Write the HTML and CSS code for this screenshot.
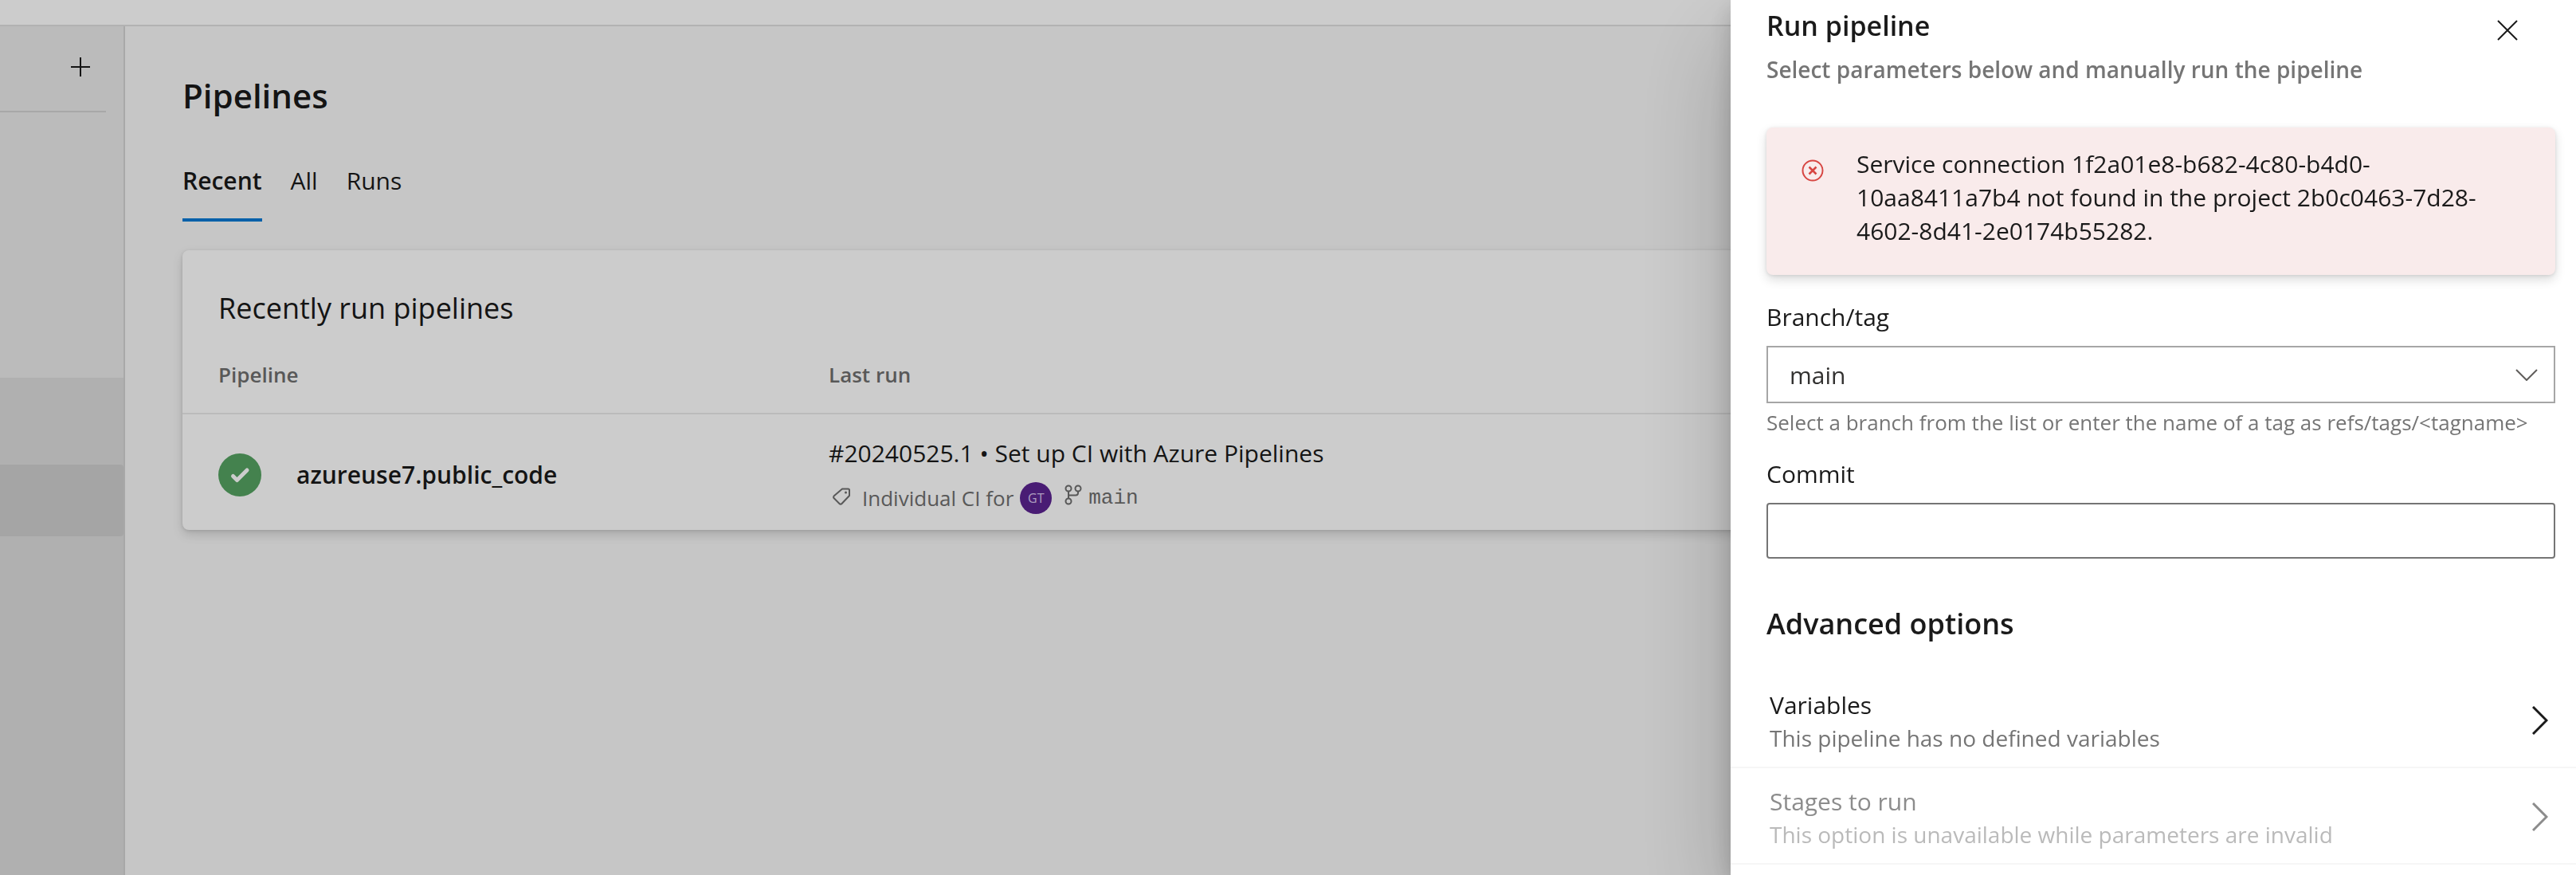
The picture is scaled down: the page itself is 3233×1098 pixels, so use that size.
FILE: index.html
```html
<!DOCTYPE html>
<html lang="en">
<head>
<meta charset="utf-8">
<meta name="viewport" content="width=device-width, initial-scale=1">
<title>Pipelines - Run pipeline</title>
<link rel="stylesheet" href="styles.css">
</head>
<body>
<div class="app">
  <header class="topbar"></header>
  <div class="workspace">
    <nav class="sidebar" aria-label="Project">
      <div class="sidebar-project">
        <button class="icon-button" type="button" aria-label="Create new">
          <svg width="26" height="26" viewBox="0 0 26 26" fill="none" stroke="currentColor" stroke-width="2"><path d="M13 1v24M1 13h24"/></svg>
        </button>
      </div>
      <div class="sidebar-group">
        <a class="sidebar-link" href="#" aria-label="Pipelines" aria-current="page"></a>
      </div>
    </nav>
    <main class="content">
      <h1 class="page-title">Pipelines</h1>
      <div class="tabs" role="tablist">
        <button class="tab tab-selected" type="button" role="tab" aria-selected="true">Recent</button>
        <button class="tab" type="button" role="tab" aria-selected="false">All</button>
        <button class="tab" type="button" role="tab" aria-selected="false">Runs</button>
      </div>
      <section class="card">
        <h2 class="card-title">Recently run pipelines</h2>
        <table class="runs">
          <thead>
            <tr><th class="col-pipeline" scope="col">Pipeline</th><th scope="col">Last run</th></tr>
          </thead>
          <tbody>
            <tr>
              <td>
                <div class="pipeline">
                  <svg class="status" width="54" height="54" viewBox="0 0 54 54" role="img" aria-label="Success"><circle cx="27" cy="27" r="27" fill="#55a362"/><path d="M18.500 28.500l5 5L36 21" fill="none" stroke="#fff" stroke-width="5" stroke-linecap="round" stroke-linejoin="round"/></svg>
                  <a class="pipeline-name" href="#">azureuse7.public_code</a>
                </div>
              </td>
              <td>
                <a class="run-title" href="#">#20240525.1 • Set up CI with Azure Pipelines</a>
                <div class="run-meta">
                  <svg class="tag-icon" width="24" height="24" viewBox="0 0 24 24" fill="none" stroke="currentColor" stroke-width="2" stroke-linejoin="round"><path d="M13 2.500h7.500a1.500 1.500 0 0 1 1.500 1.500v7L12.500 21a2 2 0 0 1-3 0L2.500 14a2 2 0 0 1 0-2.500z"/><circle cx="17.500" cy="7" r="1.500" fill="currentColor" stroke="none"/></svg>
                  <span>Individual CI for</span>
                  <span class="avatar">GT</span>
                  <svg class="branch-icon" width="22" height="26" viewBox="0 0 22 26" fill="none" stroke="currentColor" stroke-width="2"><circle cx="5" cy="5" r="3.500"/><circle cx="17" cy="5" r="3.500"/><circle cx="5" cy="21" r="3.500"/><path d="M5 8.500v9M5 13.500h9a3 3 0 0 0 3-3v-2"/></svg>
                  <span class="branch-name">main</span>
                </div>
              </td>
            </tr>
          </tbody>
        </table>
      </section>
    </main>
  </div>
</div>

<div class="backdrop">
  <aside class="panel" role="dialog" aria-labelledby="panel-title">
    <header class="panel-header">
      <div class="panel-heading">
        <h2 class="panel-title" id="panel-title">Run pipeline</h2>
        <p class="panel-subtitle">Select parameters below and manually run the pipeline</p>
      </div>
      <button class="icon-button close" type="button" aria-label="Close">
        <svg width="26" height="26" viewBox="0 0 26 26" fill="none" stroke="currentColor" stroke-width="2"><path d="M1 1l24 24M25 1L1 25"/></svg>
      </button>
    </header>
    <form class="form">
      <div class="alert" role="alert">
        <svg class="alert-icon" width="28" height="28" viewBox="0 0 28 28" fill="none" stroke="currentColor" stroke-width="2"><circle cx="14" cy="14" r="12.500"/><path d="M9.500 9.500l9 9M18.500 9.500l-9 9" stroke-width="2.500"/></svg>
        <p class="alert-text">Service connection 1f2a01e8-b682-4c80-b4d0-10aa8411a7b4 not found in the project 2b0c0463-7d28-4602-8d41-2e0174b55282.</p>
      </div>
      <div class="field">
        <label for="branch">Branch/tag</label>
        <div class="select-box">
          <select class="control select" id="branch" aria-describedby="branch-help"><option>main</option></select>
          <svg class="select-arrow" width="28" height="15" viewBox="0 0 28 15" fill="none" stroke="currentColor" stroke-width="2"><path d="M1 1l13 13L27 1"/></svg>
        </div>
        <p class="help" id="branch-help">Select a branch from the list or enter the name of a tag as refs/tags/&lt;tagname&gt;</p>
      </div>
      <div class="field">
        <label for="commit">Commit</label>
        <input class="control input" id="commit" type="text">
      </div>
      <h3 class="section-title">Advanced options</h3>
    </form>
    <div class="options">
      <button class="option" type="button">
        <span class="option-text"><span class="option-name">Variables</span><span class="option-note">This pipeline has no defined variables</span></span>
        <svg width="20" height="36" viewBox="0 0 20 36" fill="none" stroke="currentColor" stroke-width="3"><path d="M1 1l17 17L1 35"/></svg>
      </button>
      <button class="option" type="button" disabled>
        <span class="option-text"><span class="option-name">Stages to run</span><span class="option-note">This option is unavailable while parameters are invalid</span></span>
        <svg width="20" height="36" viewBox="0 0 20 36" fill="none" stroke="currentColor" stroke-width="3"><path d="M1 1l17 17L1 35"/></svg>
      </button>
    </div>
  </aside>
</div>
</body>
</html>
```
FILE: styles.css
```css
* {
  box-sizing: border-box;
}

body {
  margin: 0;
  color: #1a1a1a;
  background: #f8f8f8;
  font: 30px/42px "Open Sans", "Noto Sans", sans-serif;
}

h1, h2, h3, p {
  margin: 0;
}

a {
  color: inherit;
  text-decoration: none;
}

button, select, input {
  margin: 0;
  padding: 0;
  border: 0;
  color: inherit;
  background: none;
  font: inherit;
}

svg {
  display: block;
  flex: none;
}

.icon-button {
  display: flex;
}

/* Page behind the panel */
.app {
  display: flex;
  flex-direction: column;
  min-height: 100vh;
}

.topbar {
  height: 33px;
  border-bottom: 2px solid #dfdfdf;
  background: #fff;
}

.workspace {
  display: flex;
  flex: 1;
}

.sidebar {
  display: flex;
  flex: none;
  flex-direction: column;
  width: 157px;
  border-right: 2px solid #d2d2d2;
  background: #eaeaea;
}

.sidebar-project {
  display: flex;
  justify-content: flex-end;
  height: 108px;
  margin: 0 22px 333px 0;
  padding: 38px 19px 0 0;
  border-bottom: 2px solid #d2d2d2;
}

.sidebar-group {
  flex: 1;
  padding-top: 109px;
  background: #dcdcdc;
}

.sidebar-link {
  display: block;
  height: 90px;
  border-radius: 0 4px 4px 0;
  background: #cfcfcf;
}

.content {
  flex: 1;
  min-width: 0;
  padding: 57px 72px;
}

.page-title {
  font-size: 42px;
  font-weight: 600;
  line-height: 60px;
}

.tabs {
  display: flex;
  gap: 36px;
  margin: 56px 0 36px;
}

.tab {
  padding-bottom: 26px;
  border-bottom: 4px solid transparent;
}

.tab-selected {
  border-color: #0078d4;
  font-weight: 600;
}

.card {
  overflow: hidden;
  padding-top: 49px;
  border-radius: 8px;
  background: #fff;
  box-shadow: 0 6px 14px rgba(0, 0, 0, .14), 0 1px 4px rgba(0, 0, 0, .12);
}

.card-title {
  padding: 0 45px;
  font-size: 36px;
  font-weight: 400;
  line-height: 48px;
}

.runs {
  width: 100%;
  border-collapse: collapse;
  table-layout: fixed;
}

.runs th {
  padding: 41px 0 30px;
  border-bottom: 2px solid #eaeaea;
  color: #6f6f6f;
  font-size: 26px;
  font-weight: 600;
  line-height: 36px;
  text-align: left;
}

.runs .col-pipeline {
  width: 811px;
}

.runs th:first-child, .runs td:first-child {
  padding-left: 45px;
}

.runs td {
  padding: 26px 0 20px;
}

.pipeline {
  display: flex;
  align-items: center;
  gap: 44px;
}

.pipeline-name {
  font-weight: 600;
}

.run-title {
  display: block;
  padding-top: 2px;
}

.run-meta {
  display: flex;
  align-items: center;
  height: 41px;
  margin-top: 14px;
  color: #6f6f6f;
  font-size: 26px;
}

.tag-icon {
  margin: 0 14px 4px 4px;
}

.avatar {
  width: 40px;
  height: 40px;
  margin: 0 16px 0 8px;
  border-radius: 50%;
  color: #d9c4ee;
  background: #5c2492;
  font-size: 16px;
  line-height: 40px;
  text-align: center;
}

.branch-icon {
  margin: 0 8px 8px 0;
}

.branch-name {
  font-family: "Liberation Mono", monospace;
}

/* Run pipeline panel */
.backdrop {
  position: fixed;
  inset: 0;
  display: flex;
  justify-content: flex-end;
  overflow: hidden;
  background: rgba(0, 0, 0, .2);
}

.panel {
  width: 1061px;
  max-width: 100%;
  overflow: hidden auto;
  background: #fff;
  box-shadow: 0 50px 116px rgba(0, 0, 0, .22), 0 10px 28px rgba(0, 0, 0, .18);
}

.panel-header {
  display: flex;
  justify-content: space-between;
  padding: 8px 73px 52px 45px;
}

.panel-heading {
  display: flex;
  flex-direction: column;
  gap: 10px;
}

.panel-title, .section-title {
  font-size: 36px;
  font-weight: 600;
  line-height: 48px;
}

.panel-title {
  font-size: 34px;
}

.panel-subtitle {
  color: #757575;
  font-size: 28px;
  font-weight: 600;
}

.close {
  margin-top: 17px;
}

.form {
  padding: 0 26px 36px 45px;
}

.alert {
  display: flex;
  gap: 41px;
  margin-bottom: 32px;
  padding: 25px 45px 34px 44px;
  border-radius: 8px;
  background: #f9ebeb;
  box-shadow: 0 6px 14px rgba(0, 0, 0, .14), 0 1px 4px rgba(0, 0, 0, .1);
}

.alert-icon {
  margin-top: 15px;
  color: #d74642;
}

.field {
  margin-bottom: 26px;
}

.field label {
  display: block;
  margin-bottom: 15px;
}

.control {
  display: block;
  width: 100%;
  padding: 0 28px;
  outline: 0;
}

.select-box {
  display: grid;
  align-items: center;
}

.select-box > * {
  grid-area: 1 / 1;
}

.select {
  height: 72px;
  padding: 2px 27px 0;
  border: 2px solid #a6a6a6;
  color: #323130;
  background: #fff;
  appearance: none;
}

.select-arrow {
  justify-self: end;
  margin-right: 22px;
  color: #605e5c;
  pointer-events: none;
}

.help {
  margin-top: 6px;
  color: #757575;
  font-size: 26px;
  line-height: 36px;
}

.input {
  height: 70px;
  margin-bottom: 58px;
  border: 2px solid #757575;
  border-radius: 4px;
}

.option {
  display: flex;
  align-items: center;
  justify-content: space-between;
  width: 100%;
  padding: 19px 35px 16px 49px;
  border-bottom: 2px solid #f6f6f6;
  text-align: left;
}

.option-text {
  padding-top: 2px;
}

.option-name, .option-note {
  display: block;
}

.option-note {
  color: #757575;
  font-size: 28px;
  line-height: 40px;
}

.option:disabled {
  color: #8c8c8c;
}

.option:disabled .option-note {
  color: #bababa;
}
```
